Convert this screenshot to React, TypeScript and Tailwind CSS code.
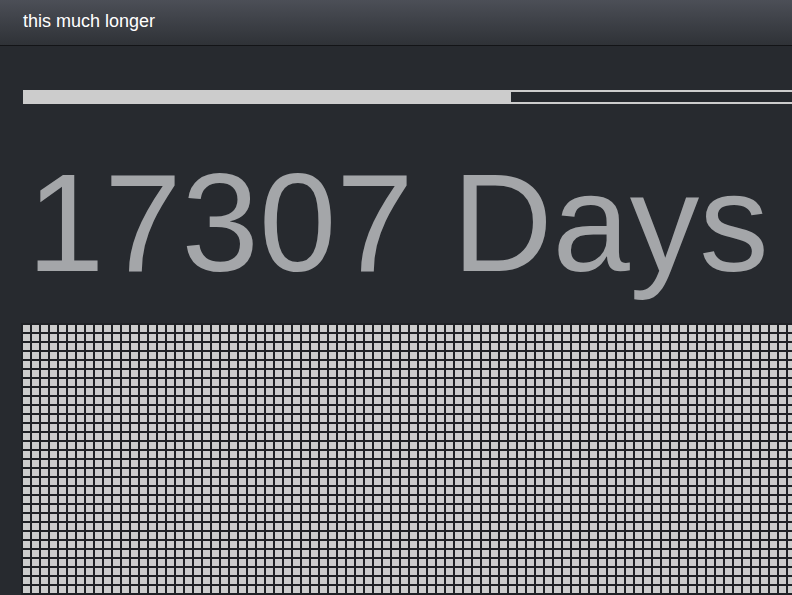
const COLS = 86;
const ROWS = 32;

export default function App() {
  const cells = Array.from({ length: COLS * ROWS }, (_, i) => i);

  return (
    <div
      className="w-screen h-screen overflow-hidden bg-[#272a2f]"
      style={{ fontFamily: '"Liberation Sans", Arial, sans-serif' }}
    >
      {/* Header */}
      <div className="h-[46px] bg-gradient-to-b from-[#4c4f57] to-[#2f3237] border-b border-[#131417] flex items-center px-[23px]">
        <span className="text-white text-[18px] leading-none -mt-[3px]">this much longer</span>
      </div>

      {/* Content */}
      <div className="pl-[23px] pt-[44px]">
        {/* Progress */}
        <div className="w-[1000px] h-[14px] border-2 border-[#cccccc] bg-[#25282d]">
          <div className="h-full w-[486px] bg-[#cccccc]" />
        </div>

        {/* Count */}
        <div className="mt-[38px] ml-[4px] text-[139px] leading-[161px] text-[#a4a6a9] whitespace-nowrap">
          17307 Days
        </div>

        {/* Days grid */}
        <div className="mt-[20px] -ml-[2px] w-[776px] bg-[#1f2125] p-[2px] flex flex-wrap gap-[2px]">
          {cells.map(i => (
            <div key={i} className="w-[7px] h-[7px] bg-[#cccccc]" />
          ))}
        </div>
      </div>
    </div>
  );
}
